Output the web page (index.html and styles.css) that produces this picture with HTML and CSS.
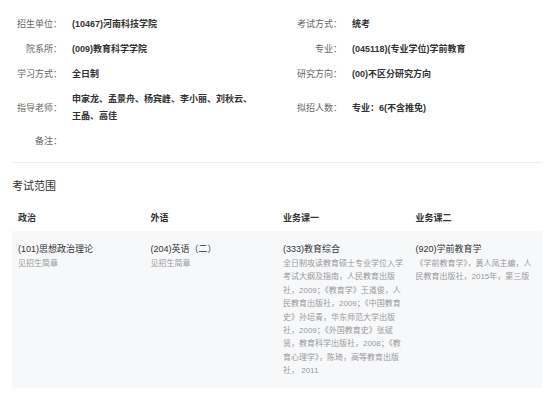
FILE: index.html
```html
<!DOCTYPE html>
<html lang="zh-CN">
<head>
    <meta charset="UTF-8">
    <meta name="viewport" content="width=device-width, initial-scale=1.0">
    <title>专业详情</title>
    <link rel="stylesheet" href="styles.css">
</head>
<body>
    <div class="page">
        <div class="info-grid">
            <div class="info-item">
                <span class="label">招生单位：</span>
                <span class="value">(10467)河南科技学院</span>
            </div>
            <div class="info-item">
                <span class="label">考试方式：</span>
                <span class="value">统考</span>
            </div>
            <div class="info-item">
                <span class="label">院系所：</span>
                <span class="value">(009)教育科学学院</span>
            </div>
            <div class="info-item">
                <span class="label">专业：</span>
                <span class="value">(045118)(专业学位)学前教育</span>
            </div>
            <div class="info-item">
                <span class="label">学习方式：</span>
                <span class="value">全日制</span>
            </div>
            <div class="info-item">
                <span class="label">研究方向：</span>
                <span class="value">(00)不区分研究方向</span>
            </div>
            <div class="info-item">
                <span class="label">指导老师：</span>
                <span class="value">申家龙、孟景舟、杨宾峰、李小丽、刘秋云、王晶、高佳</span>
            </div>
            <div class="info-item">
                <span class="label">拟招人数：</span>
                <span class="value">专业：6(不含推免)</span>
            </div>
            <div class="info-item">
                <span class="label">备注：</span>
                <span class="value"></span>
            </div>
            <div class="info-item"></div>
        </div>

        <div class="divider"></div>

        <h3 class="section-title">考试范围</h3>

        <table class="exam-table">
            <thead>
                <tr>
                    <th>政治</th>
                    <th>外语</th>
                    <th>业务课一</th>
                    <th>业务课二</th>
                </tr>
            </thead>
            <tbody>
                <tr>
                    <td>
                        <div class="subject">(101)思想政治理论</div>
                        <div class="note">见招生简章</div>
                    </td>
                    <td>
                        <div class="subject">(204)英语（二）</div>
                        <div class="note">见招生简章</div>
                    </td>
                    <td>
                        <div class="subject">(333)教育综合</div>
                        <div class="note">全日制攻读教育硕士专业学位入学考试大纲及指南，人民教育出版社，2009；《教育学》王道俊，人民教育出版社，2009；《中国教育史》孙培青，华东师范大学出版社，2009；《外国教育史》张斌贤，教育科学出版社，2008；《教育心理学》，陈琦，高等教育出版社， 2011</div>
                    </td>
                    <td>
                        <div class="subject">(920)学前教育学</div>
                        <div class="note">《学前教育学》，黄人凤主编，人民教育出版社，2015年，第三版</div>
                    </td>
                </tr>
            </tbody>
        </table>
    </div>
</body>
</html>
```

FILE: styles.css
```css
body {
    margin: 0;
    font-family: "Liberation Sans", "Noto Sans CJK SC", sans-serif;
    color: #333;
    background-color: #fff;
}
.page {
    padding: 12px 12px 0;
}
.info-grid {
    display: grid;
    grid-template-columns: 280px 1fr;
}
.info-item {
    display: flex;
    align-items: center;
    padding: 4px 0;
    font-size: 9px;
    line-height: 17px;
}
.label {
    flex: 0 0 50px;
    text-align: right;
    color: #666;
    margin-right: 10px;
}
.value {
    font-weight: bold;
    color: #333;
    max-width: 184px;
}
.divider {
    height: 1px;
    background-color: #eee;
    margin-top: 8px;
}
.section-title {
    font-size: 11px;
    font-weight: normal;
    line-height: 16px;
    margin: 15px 0 11px;
    color: #333;
}
.exam-table {
    width: 100%;
    border-collapse: collapse;
    table-layout: fixed;
    font-size: 9px;
}
.exam-table th {
    text-align: left;
    font-weight: bold;
    height: 26px;
    padding: 0 6px;
    line-height: 16px;
}
.exam-table td {
    vertical-align: top;
    background-color: #f7f8fa;
    padding: 10px 6px 10px;
}
.subject {
    line-height: 16px;
    color: #333;
}
.note {
    font-size: 8px;
    line-height: 13.4px;
    color: #999;
}
```
